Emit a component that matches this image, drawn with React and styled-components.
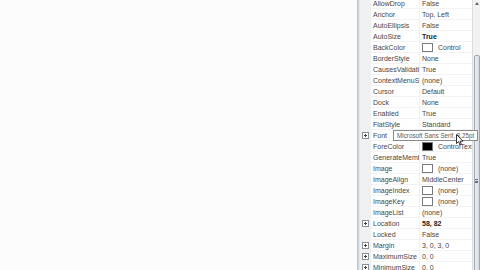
import React from 'react';
import styled, { createGlobalStyle } from 'styled-components';

const GlobalStyle = createGlobalStyle`
  html, body {
    margin: 0;
    padding: 0;
    width: 480px;
    height: 270px;
    overflow: hidden;
    background: #fcfcfc;
  }
`;

const Page = styled.div`
  display: flex;
  width: 480px;
  height: 270px;
  overflow: hidden;
  font-family: "Liberation Sans", "DejaVu Sans", sans-serif;
`;

const Canvas = styled.div`
  flex: 0 0 357px;
  background: #fcfcfc;
`;

const Splitter = styled.div`
  flex: 0 0 3px;
  background: #ccd4dc;
  border-left: 1px solid #bcc6d0;
  border-right: 1px solid #e4e8ec;
  box-sizing: border-box;
`;

const Grid = styled.div`
  position: relative;
  flex: 0 0 112px;
  min-width: 0;
  background: #ffffff;
`;

const Rows = styled.div`
  display: flex;
  flex-direction: column;
  margin-top: -2px;
`;

const Row = styled.div`
  position: relative;
  display: flex;
  height: 11px;
  line-height: 11px;
  font-size: 7px;
  color: #464646;
`;

const Gutter = styled.div`
  flex: 0 0 11px;
  display: flex;
  align-items: center;
  justify-content: center;
  background: #f0f0f0;
`;

const Expander = styled.span`
  width: 5px;
  height: 5px;
  border: 1px solid #8a8f99;
  background: #fff;
  position: relative;
  &::before {
    content: '';
    position: absolute;
    left: 1px;
    right: 1px;
    top: 2px;
    height: 1px;
    background: #444;
  }
  &::after {
    content: '';
    position: absolute;
    top: 1px;
    bottom: 1px;
    left: 2px;
    width: 1px;
    background: #444;
  }
`;

const Name = styled.div`
  flex: 0 0 49px;
  padding-left: 2px;
  box-sizing: border-box;
  white-space: nowrap;
  overflow: hidden;
  border-bottom: 1px solid #f3f3f3;
  border-right: 1px solid #f0f0f0;
`;

const Value = styled.div`
  flex: 1;
  min-width: 0;
  display: flex;
  align-items: center;
  padding-left: 2px;
  white-space: nowrap;
  overflow: hidden;
  font-weight: ${(p) => (p.bold ? 'bold' : 'normal')};
  color: ${(p) => (p.bold ? '#222' : '#464646')};
  border-bottom: 1px solid #f3f3f3;
`;

const Swatch = styled.span`
  flex: 0 0 auto;
  width: 9px;
  height: 7px;
  margin-right: 5px;
  border: 1px solid #7a7a7a;
  background: ${(p) => p.color || '#fff'};
`;

const Tooltip = styled.div`
  position: absolute;
  left: 33px;
  top: 0;
  height: 11px;
  padding: 0 3px;
  line-height: 10px;
  font-size: 6.3px;
  color: #5a5a5a;
  background: #fff;
  border: 1px solid #8a8a8a;
  box-sizing: border-box;
  white-space: nowrap;
  z-index: 2;
`;

const Pointer = styled.svg`
  position: absolute;
  left: 96px;
  top: 4px;
  z-index: 3;
`;

const ScrollBar = styled.div`
  position: relative;
  flex: 0 0 8px;
  background: #f2f2f2;
  border-left: 1px solid #dcdcdc;
  box-sizing: border-box;
  display: flex;
  flex-direction: column;
  align-items: center;
`;

const Arrow = styled.div`
  margin-top: 2px;
  width: 0;
  height: 0;
  border-left: 2px solid transparent;
  border-right: 2px solid transparent;
  border-bottom: 3px solid #6a6a6a;
`;

const Thumb = styled.div`
  margin-top: 50px;
  width: 6px;
  flex: 1;
  margin-bottom: -4px;
  background: linear-gradient(90deg, #eceef2, #d8dce4);
  border: 1px solid #9ea6b4;
  border-radius: 2px;
  box-sizing: border-box;
  display: flex;
  justify-content: center;
  padding-top: 123px;
`;

const Grip = styled.div`
  width: 3px;
  height: 4px;
  border-top: 1px solid #6a7080;
  border-bottom: 1px solid #6a7080;
  box-sizing: border-box;
  position: relative;
  &::after {
    content: '';
    position: absolute;
    left: 0;
    right: 0;
    top: 1px;
    height: 1px;
    background: #6a7080;
  }
`;

const props = [
  { name: 'AllowDrop', value: 'False' },
  { name: 'Anchor', value: 'Top, Left' },
  { name: 'AutoEllipsis', value: 'False' },
  { name: 'AutoSize', value: 'True', bold: true },
  { name: 'BackColor', value: 'Control', swatch: '#ffffff' },
  { name: 'BorderStyle', value: 'None' },
  { name: 'CausesValidation', value: 'True' },
  { name: 'ContextMenuStrip', value: '(none)' },
  { name: 'Cursor', value: 'Default' },
  { name: 'Dock', value: 'None' },
  { name: 'Enabled', value: 'True' },
  { name: 'FlatStyle', value: 'Standard' },
  { name: 'Font', value: 'Microsoft Sans Serif, 8.25pt', expand: true, tooltip: true },
  { name: 'ForeColor', value: 'ControlText', swatch: '#000000' },
  { name: 'GenerateMember', value: 'True' },
  { name: 'Image', value: '(none)', swatch: '#ffffff' },
  { name: 'ImageAlign', value: 'MiddleCenter' },
  { name: 'ImageIndex', value: '(none)', swatch: '#ffffff' },
  { name: 'ImageKey', value: '(none)', swatch: '#ffffff' },
  { name: 'ImageList', value: '(none)' },
  { name: 'Location', value: '58, 82', expand: true, bold: true },
  { name: 'Locked', value: 'False' },
  { name: 'Margin', value: '3, 0, 3, 0', expand: true },
  { name: 'MaximumSize', value: '0, 0', expand: true },
  { name: 'MinimumSize', value: '0, 0', expand: true },
];

const App = () => {
  return (
    <Page>
      <GlobalStyle />
      <Canvas />
      <Splitter />
      <Grid>
        <Rows>
          {props.map((p) => (
            <Row key={p.name}>
              <Gutter>{p.expand && <Expander />}</Gutter>
              <Name>{p.name}</Name>
              <Value bold={p.bold}>
                {p.swatch && <Swatch color={p.swatch} />}
                {p.value}
              </Value>
              {p.tooltip && (
                <>
                  <Tooltip>{p.value}</Tooltip>
                  <Pointer width="8" height="12" viewBox="0 0 8 12">
                    <path d="M0.5 0.5 L0.5 9.5 L2.6 7.6 L4 11 L5.4 10.4 L4 7.2 L7 7.2 Z" fill="#fff" stroke="#000" strokeWidth="0.8" />
                  </Pointer>
                </>
              )}
            </Row>
          ))}
        </Rows>
      </Grid>
      <ScrollBar>
        <Arrow />
        <Thumb>
          <Grip />
        </Thumb>
      </ScrollBar>
    </Page>
  );
};

export default App;
